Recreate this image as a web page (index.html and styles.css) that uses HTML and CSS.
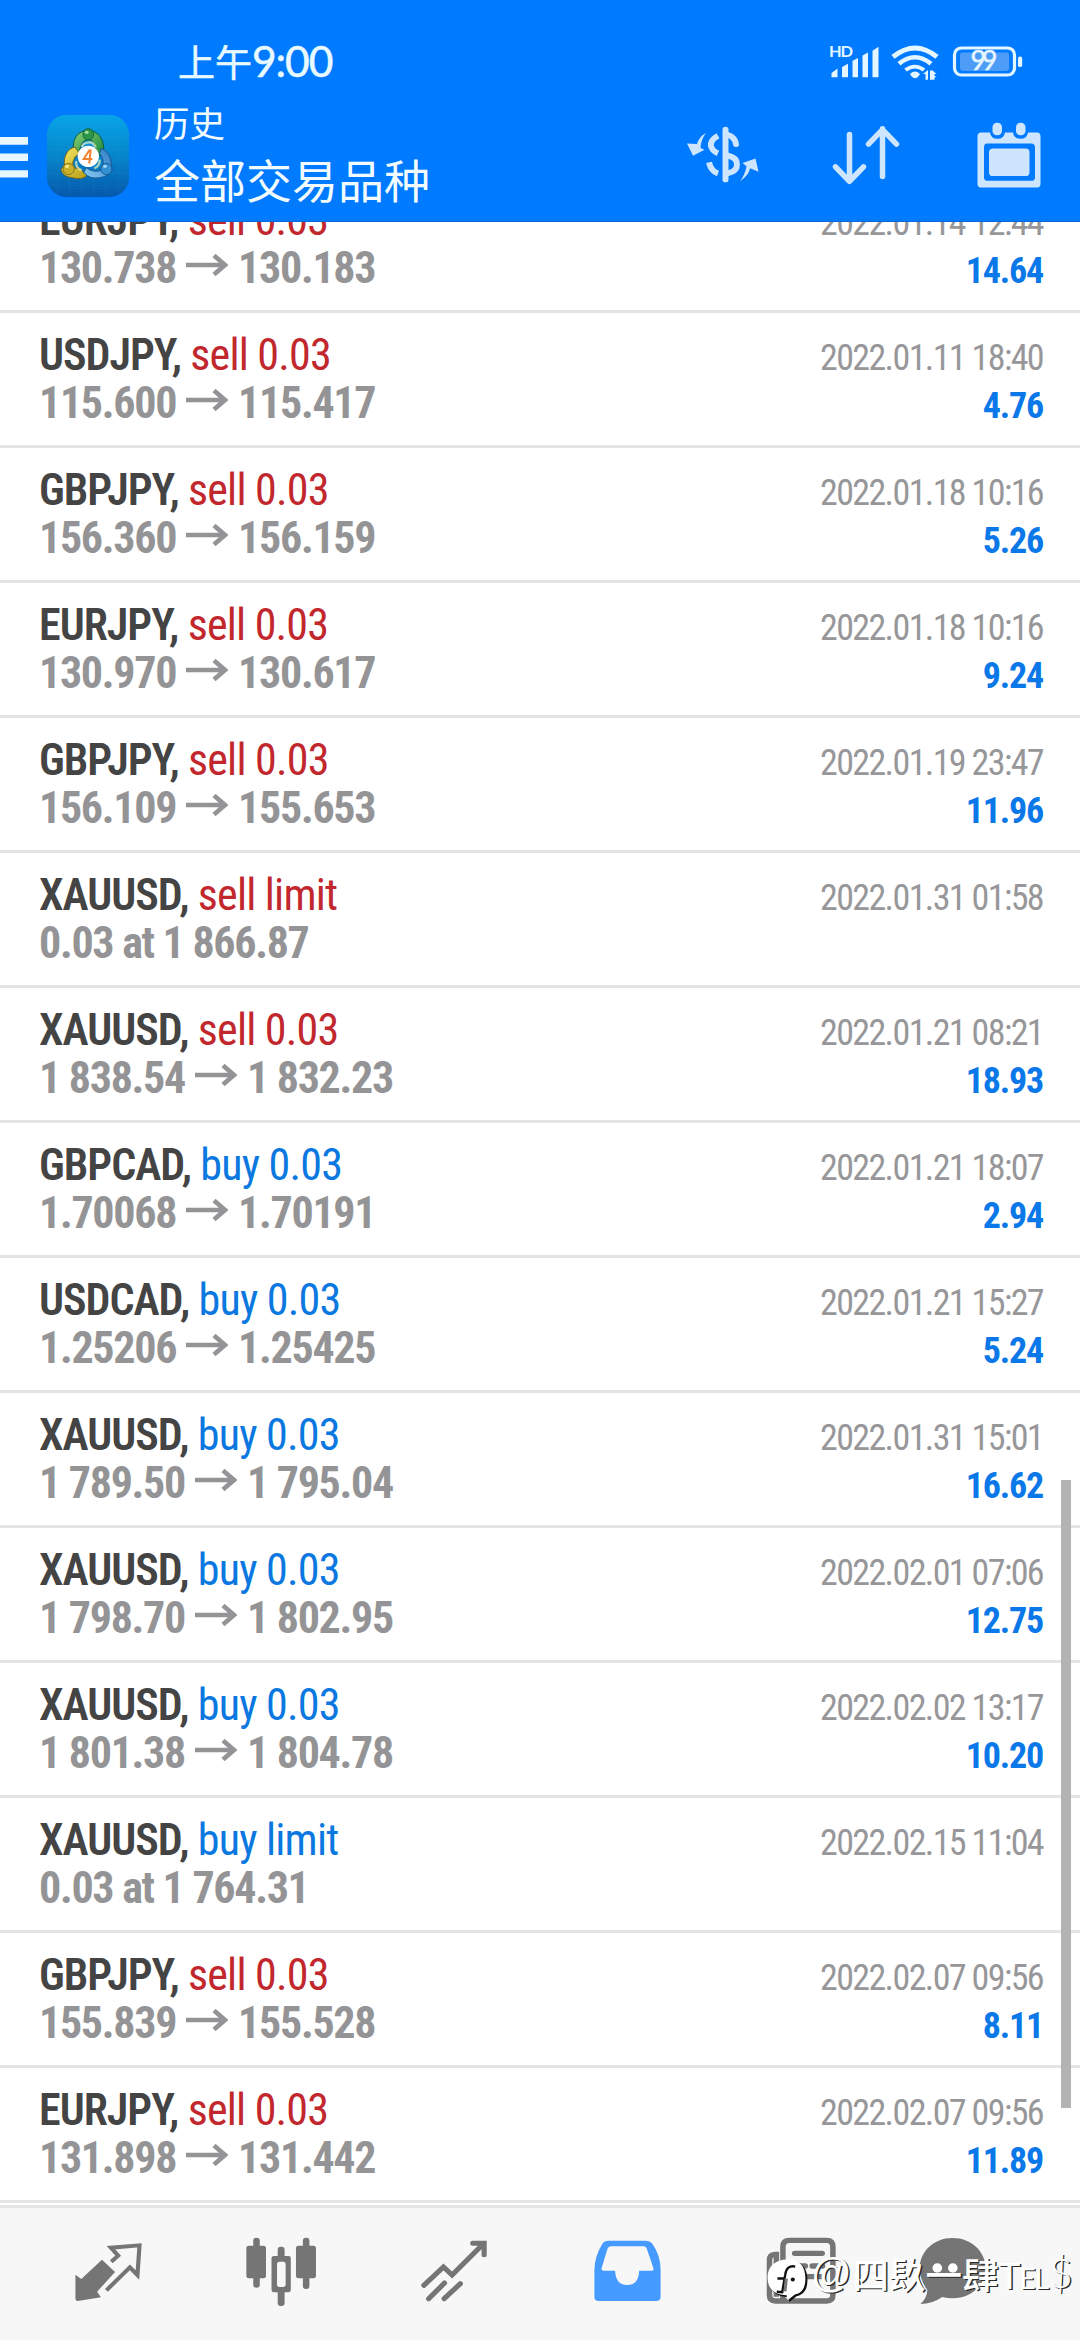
FILE: index.html
```html
<!DOCTYPE html>
<html lang="zh-CN">
<head>
<meta charset="utf-8">
<title>历史</title>
<link rel="stylesheet" href="styles.css">
</head>
<body>
<svg class="defs" width="0" height="0">
  <symbol id="arrow" viewBox="0 0 42 22"><path d="M0 11H38M28 1.5L39 11L28 20.5" fill="none" stroke="#949496" stroke-width="4.6"/></symbol>
</svg>
<header class="header">
  <div class="status">
    <div class="clock"><span class="ampm">上午</span>9:00</div>
    <svg class="signals" viewBox="828 42 196 44" width="196" height="42.6" preserveAspectRatio="none" fill="#e4f6ff">
      <text class="hd" x="828" y="60" textLength="24">HD</text>
      <path d="M830.5 80.500V76l6-4.500v9zM841 80.500V70l6-3.500v14zM851.500 80.500V63.500l5.500-3v20zM861.500 80.500V58l5.500-3v25.500zM871.500 80.500V53l6-4v31.500z"/>
      <g fill="none" stroke="#e4f6ff" stroke-width="5">
        <path d="M892 59.500Q914 41 936 59.500"/>
        <path d="M898 66.500Q914 53 930 66.500" stroke-width="4.600"/>
        <path d="M904.500 73Q914 66 923 73" stroke-width="4"/>
      </g>
      <path d="M909 77q5-5 10 0q-5 9-10 0zM922 77l5-4v10h-2.500v-6zM929 73.500h2.500v6h4l-4.500 3.500h-2zM931 83v-10l4.500 4h-2v6z"/>
      <rect x="953.500" y="50.200" width="60" height="28" rx="7" fill="none" stroke="#e4f6ff" stroke-width="3.200"/>
      <rect x="959" y="55" width="49" height="19" rx="2.500" fill="#4d9cf8"/>
      <rect x="1017" y="59" width="4.200" height="11" rx="2"/>
      <text class="pct" x="969.500" y="73.500" textLength="27">99</text>
    </svg>
  </div>
  <div class="toolbar">
    <svg class="menu" viewBox="0 0 28 42" width="28" height="40.5" preserveAspectRatio="none" fill="#e6f7ff"><path d="M0 0h28v8H0zM0 17h28v8H0zM0 34.500h28v7.500H0z"/></svg>
    <svg class="logo" viewBox="0 0 246 246" width="82" height="82">
      <defs>
        <linearGradient id="bg" x1="0" y1="0" x2="0" y2="1"><stop offset="0" stop-color="#08a4e8"/><stop offset=".5" stop-color="#0785c9"/><stop offset="1" stop-color="#0558ad"/></linearGradient>
        <linearGradient id="gr" x1="0" y1="0" x2="1" y2="1"><stop offset="0" stop-color="#8ad278"/><stop offset="1" stop-color="#178638"/></linearGradient>
        <linearGradient id="ye" x1="0" y1="0" x2="1" y2="1"><stop offset="0" stop-color="#fbec6a"/><stop offset="1" stop-color="#b49a10"/></linearGradient>
        <linearGradient id="bl" x1="1" y1="0" x2="0" y2="1"><stop offset="0" stop-color="#2a78c0"/><stop offset="1" stop-color="#8accf3"/></linearGradient>
      </defs>
      <rect width="246" height="246" rx="58" fill="url(#bg)"/>
      <path d="M32 8v230M68 2v242M104 0v246M140 0v246M176 0v246M214 6v234M6 32h234M0 68h246M0 104h246M0 140h246M0 176h246M6 212h234" stroke="#4cc4ee" stroke-opacity=".13" stroke-width="2"/>
      <g stroke-width="3">
        <path d="M82 118C70 70 96 46 124 46S178 76 168 122L146 120Q148 74 124 74T96 118Z" fill="url(#gr)" stroke="#0c5a38"/>
        <path d="M84 96C58 102 50 128 52 150L42 164Q48 186 76 188Q104 196 120 182L98 160Q74 164 78 140Q82 122 98 116Z" fill="url(#ye)" stroke="#6b6420"/>
        <path d="M162 100Q190 112 192 140L196 162Q190 184 158 188Q128 194 110 172L118 158Q142 176 166 164Q174 130 158 116Z" fill="url(#bl)" stroke="#155a96"/>
        <ellipse cx="124" cy="58" rx="16" ry="17" fill="#2e9648" stroke="#146436"/>
        <circle cx="65" cy="162" r="17" fill="#cbb02a" stroke="#857718"/>
        <circle cx="178" cy="162" r="17" fill="#3390d2" stroke="#165a9a"/>
      </g>
      <path d="M88 138Q84 158 104 166M158 134Q160 152 142 160M104 96Q108 84 124 82T146 98" fill="none" stroke="#e8f3c0" stroke-opacity=".7" stroke-width="7"/>
      <ellipse cx="119" cy="52" rx="6" ry="5" fill="#a5dfa0"/><ellipse cx="60" cy="154" rx="6" ry="5" fill="#f6e98a"/><ellipse cx="174" cy="154" rx="6" ry="5" fill="#9fd6f5"/>
      <circle cx="124" cy="124" r="32" fill="#fff"/>
      <path d="M128 104L110 132H136M131 103L127 146" fill="none" stroke="#f08232" stroke-width="6"/>
    </svg>
    <div class="titles">
      <div class="title">历史</div>
      <div class="subtitle">全部交易品种</div>
    </div>
    <svg class="actions" viewBox="680 120 370 84" width="370" height="81.3" preserveAspectRatio="none" fill="#cde5ff">
      <path d="M705 137.500Q698 141 696 149L686 148.500L692 161L703.500 155L699.500 153Q700 144 705 137.500zM739 187.500Q748 181 749 174L757.500 177.500L754.500 164L741.500 168.500L745.500 172Q744 181 739 187.500z"/>
      <g fill="none" stroke="#cde5ff" stroke-linecap="round">
        <path d="M724.500 134V185.500" stroke-width="6"/>
        <path d="M717 140.500Q709 145 710 151Q711 156 717 158.500M708 168Q710 177 717 179.500" stroke-width="6" stroke-linecap="butt"/>
        <path d="M727 139.500Q734 142 735 149M727 161Q736 163 736 170T727 179" stroke-width="6"/>
        <path d="M848.500 139V187M834.500 172.500L848.500 187.500L862.500 172.500M881.500 182.500V133M867.500 149L881.500 134L895.500 149" stroke-width="5.500" stroke-linejoin="round"/>
      </g>
      <path fill-rule="evenodd" d="M980 137h9q1 6.500 7.500 6.500t7.500-6.500h8q1 6.500 7.500 6.500t7.500-6.500h9q3.500 0 3.500 4v49q0 4-4 4h-55q-4 0-4-4v-49q0-4 3.500-4zM986 148.500q-3 0-3 4v31q0 3.500 4 3.500h43q4 0 4-3.500v-31q0-4-4-4z"/>
      <rect x="988" y="153.500" width="40.500" height="28.500" rx="4"/>
      <rect x="991.500" y="127" width="9.500" height="13" rx="4.500"/><rect x="1015" y="127" width="9.500" height="13" rx="4.500"/>
    </svg>
  </div>
</header>
<main class="list">
  <div class="row"><div class="line"><div><b>EURJPY,</b> <span class="sell">sell 0.03</span></div><time>2022.01.14 12:44</time></div><div class="line"><div class="price">130.738<svg><use href="#arrow"/></svg>130.183</div><div class="profit">14.64</div></div></div>
  <div class="row"><div class="line"><div><b>USDJPY,</b> <span class="sell">sell 0.03</span></div><time>2022.01.11 18:40</time></div><div class="line"><div class="price">115.600<svg><use href="#arrow"/></svg>115.417</div><div class="profit">4.76</div></div></div>
  <div class="row"><div class="line"><div><b>GBPJPY,</b> <span class="sell">sell 0.03</span></div><time>2022.01.18 10:16</time></div><div class="line"><div class="price">156.360<svg><use href="#arrow"/></svg>156.159</div><div class="profit">5.26</div></div></div>
  <div class="row"><div class="line"><div><b>EURJPY,</b> <span class="sell">sell 0.03</span></div><time>2022.01.18 10:16</time></div><div class="line"><div class="price">130.970<svg><use href="#arrow"/></svg>130.617</div><div class="profit">9.24</div></div></div>
  <div class="row"><div class="line"><div><b>GBPJPY,</b> <span class="sell">sell 0.03</span></div><time>2022.01.19 23:47</time></div><div class="line"><div class="price">156.109<svg><use href="#arrow"/></svg>155.653</div><div class="profit">11.96</div></div></div>
  <div class="row"><div class="line"><div><b>XAUUSD,</b> <span class="sell">sell limit</span></div><time>2022.01.31 01:58</time></div><div class="line"><div class="price">0.03 at 1 866.87</div></div></div>
  <div class="row"><div class="line"><div><b>XAUUSD,</b> <span class="sell">sell 0.03</span></div><time>2022.01.21 08:21</time></div><div class="line"><div class="price">1 838.54<svg><use href="#arrow"/></svg>1 832.23</div><div class="profit">18.93</div></div></div>
  <div class="row"><div class="line"><div><b>GBPCAD,</b> <span class="buy">buy 0.03</span></div><time>2022.01.21 18:07</time></div><div class="line"><div class="price">1.70068<svg><use href="#arrow"/></svg>1.70191</div><div class="profit">2.94</div></div></div>
  <div class="row"><div class="line"><div><b>USDCAD,</b> <span class="buy">buy 0.03</span></div><time>2022.01.21 15:27</time></div><div class="line"><div class="price">1.25206<svg><use href="#arrow"/></svg>1.25425</div><div class="profit">5.24</div></div></div>
  <div class="row"><div class="line"><div><b>XAUUSD,</b> <span class="buy">buy 0.03</span></div><time>2022.01.31 15:01</time></div><div class="line"><div class="price">1 789.50<svg><use href="#arrow"/></svg>1 795.04</div><div class="profit">16.62</div></div></div>
  <div class="row"><div class="line"><div><b>XAUUSD,</b> <span class="buy">buy 0.03</span></div><time>2022.02.01 07:06</time></div><div class="line"><div class="price">1 798.70<svg><use href="#arrow"/></svg>1 802.95</div><div class="profit">12.75</div></div></div>
  <div class="row"><div class="line"><div><b>XAUUSD,</b> <span class="buy">buy 0.03</span></div><time>2022.02.02 13:17</time></div><div class="line"><div class="price">1 801.38<svg><use href="#arrow"/></svg>1 804.78</div><div class="profit">10.20</div></div></div>
  <div class="row"><div class="line"><div><b>XAUUSD,</b> <span class="buy">buy limit</span></div><time>2022.02.15 11:04</time></div><div class="line"><div class="price">0.03 at 1 764.31</div></div></div>
  <div class="row"><div class="line"><div><b>GBPJPY,</b> <span class="sell">sell 0.03</span></div><time>2022.02.07 09:56</time></div><div class="line"><div class="price">155.839<svg><use href="#arrow"/></svg>155.528</div><div class="profit">8.11</div></div></div>
  <div class="row"><div class="line"><div><b>EURJPY,</b> <span class="sell">sell 0.03</span></div><time>2022.02.07 09:56</time></div><div class="line"><div class="price">131.898<svg><use href="#arrow"/></svg>131.442</div><div class="profit">11.89</div></div></div>
  <div class="scrollbar"></div>
</main>
<nav class="tabs">
  <svg viewBox="64 84 502 396" preserveAspectRatio="none"><path d="M296 239L334 276L282 335L293 352L226 363Q219 363 219 355V284L236 297Z" fill="#757575"/><path d="M323 245L343 227L322 203L405 196L399 285L377 262L309 331" fill="none" stroke="#757575" stroke-width="12"/></svg>
  <svg viewBox="566 84 502 396" preserveAspectRatio="none" fill="#757575"><rect x="715" y="197" width="57" height="98" rx="7"/><rect x="735" y="173" width="19" height="150" rx="9"/><rect x="859" y="197" width="58" height="98" rx="7"/><rect x="879" y="173" width="19" height="154" rx="9"/><rect x="806" y="200" width="20" height="178" rx="9"/><rect x="788" y="228" width="56" height="109" rx="7"/><rect x="804" y="245" width="25" height="76" rx="7" fill="#f7f7f7"/></svg>
  <svg viewBox="1069 84 502 396" preserveAspectRatio="none" fill="none" stroke="#757575" stroke-width="15" stroke-linecap="round"><path d="M1231 316L1288 261L1313 285L1404 191M1373 190H1406V224M1245 356L1291 309M1290 356L1337 311" stroke-linejoin="miter"/></svg>
  <svg viewBox="3 84 502 396" preserveAspectRatio="none" fill="#459bff"><path fill-rule="evenodd" d="M198 182H308Q319 182 325 190Q350 225 350 270V350Q350 363 337 363H171Q158 363 158 350V270Q158 230 181 191Q187 182 198 182ZM207 199Q199 199 196 206L179 264Q177 272 185 272H218Q220 315 253 315T288 272H323Q332 272 329 264L310 206Q308 199 300 199Z"/></svg>
  <svg viewBox="505 84 502 396" preserveAspectRatio="none" fill="none" stroke="#757575" stroke-width="16"><path d="M705 363V200Q705 181 724 181H832Q850 181 850 200V345Q850 363 832 363H683Q666 363 666 345V240Q666 224 682 223H686V350"/><path d="M739 220H819M740 258H770M790 258H820M740 290H820" stroke-linecap="round"/></svg>
  <svg viewBox="1008 84 502 396" preserveAspectRatio="none" fill="#757575"><path d="M1198 174C1254 174 1294 215 1294 265S1252 355 1198 355Q1184 355 1168 351Q1140 372 1105 372Q1124 354 1125 330Q1103 300 1103 265C1103 215 1143 174 1198 174Z"/><g fill="#fff"><circle cx="1154" cy="264" r="14"/><circle cx="1199" cy="264" r="14"/></g></svg>
</nav>
<div class="watermark">
  <svg viewBox="0 0 120 135" width="42" height="46"><path d="M65 12C102 12 118 34 118 68C118 98 106 112 86 116L65 133L62 118C24 118 5 98 5 64C5 34 26 12 65 12Z" fill="#111" transform="translate(2 2)"/><path d="M62 10C100 10 114 32 114 66C114 96 102 110 84 112L62 130L59 115C22 115 3 95 3 62C3 32 24 10 62 10Z" fill="#fff"/><path d="M84 31Q59 26 55 54L46 106L30 105M32 66H50" fill="none" stroke="#111" stroke-width="7"/><path d="M58 66L54 104" stroke="#757575" stroke-width="9"/><circle cx="77" cy="69" r="6" fill="#111"/></svg>
  <span class="wm-at">@</span><span class="wm-cjk">四镹一肆</span><span class="wm-lat">T<small>EL</small></span><span class="wm-usd">$</span>
</div>
</body>
</html>
```
FILE: styles.css
```css
* { box-sizing: border-box; }
body {
  margin: 0;
  width: 1080px;
  height: 2340px;
  overflow: hidden;
  position: relative;
  display: flex;
  flex-direction: column;
  background: #fff;
  font-family: "Roboto Condensed", Roboto, "Noto Sans CJK SC", sans-serif;
}
svg { display: block; }
.defs { position: absolute; }

.header {
  position: relative;
  z-index: 1;
  flex: none;
  height: 222px;
  background: #007aff;
  border-bottom: 1px solid #0a68d0;
  color: #e8faff;
}
.status {
  height: 98px;
  padding: 40px 55px 0 178px;
  display: flex;
  justify-content: space-between;
}
.clock {
  margin-top: -1px;
  font: 42.5px/44px Lato, sans-serif;
  letter-spacing: -1.1px;
  white-space: nowrap;
  -webkit-text-stroke: 0.5px #e8faff;
}
.ampm { font: 37px/40px "Noto Sans CJK SC", sans-serif; letter-spacing: 0; }
.hd { font: 700 16.5px Lato, sans-serif; }
.pct { font: 27px Lato, sans-serif; stroke: #e4f6ff; stroke-width: 0.6px; }

.toolbar { display: flex; height: 123px; align-items: flex-start; }
.menu { margin-top: 39px; }
.logo { margin: 17px 0 0 19px; }
.titles {
  margin-left: 25px;
  color: #f2fcff;
  font-family: "Noto Sans CJK SC", sans-serif;
  white-space: nowrap;
}
.title { font-size: 35.5px; line-height: 48px; }
.subtitle { font-size: 46px; line-height: 64px; }
.actions { margin: 18px 29px 0 auto; }

.list {
  position: relative;
  flex: none;
  height: 2025px;
  margin-top: -44px;
}
.row {
  height: 135px;
  padding: 18px 37px 0 39px;
  border-bottom: 3px solid #e4e4e4;
}
.line {
  height: 48px;
  display: flex;
  justify-content: space-between;
  align-items: baseline;
  font-size: 44px;
  line-height: 48px;
  letter-spacing: -0.8px;
  white-space: nowrap;
}
.line b { color: #444; font-weight: 600; letter-spacing: -1px; }
.sell { color: #c1272d; }
.buy { color: #0a78e0; }
.line time { font-size: 36px; letter-spacing: -1.62px; color: #97979a; }
.price { color: #949496; font-weight: 700; letter-spacing: -1.3px; }
.price svg { display: inline-block; width: 42px; height: 22px; margin: 0 10px; vertical-align: 7px; }
.profit { font-size: 36px; font-weight: 700; letter-spacing: -1.2px; color: #0a78e8; }
.scrollbar {
  position: absolute;
  left: 1061px;
  top: 1302px;
  width: 10px;
  height: 628px;
  background: #b3b3b3;
}

.tabs {
  flex: none;
  height: 135px;
  margin-top: 2px;
  padding: 0 20px 0 22px;
  display: flex;
  background: #f7f7f7;
  border-top: 3px solid #e4e4e4;
}
.tabs svg { width: 173px; height: 132px; }

.watermark {
  position: absolute;
  left: 766px;
  top: 2256px;
  height: 46px;
  display: flex;
  color: #fff;
  white-space: nowrap;
  text-shadow: 1.4px 1.4px 0 #2a2a2a;
}
.wm-at { font: 40px/34px "Liberation Sans", sans-serif; margin-left: 3px; }
.wm-cjk { font: 500 36.5px/36px "Noto Sans CJK SC", sans-serif; margin-left: 1px; }
.wm-lat { font: 37px/38px Lato, sans-serif; letter-spacing: -1px; }
.wm-lat small { font-size: 28px; }
.wm-usd { font: 300 41px/34px Lato, sans-serif; margin-left: 1px; }
```
